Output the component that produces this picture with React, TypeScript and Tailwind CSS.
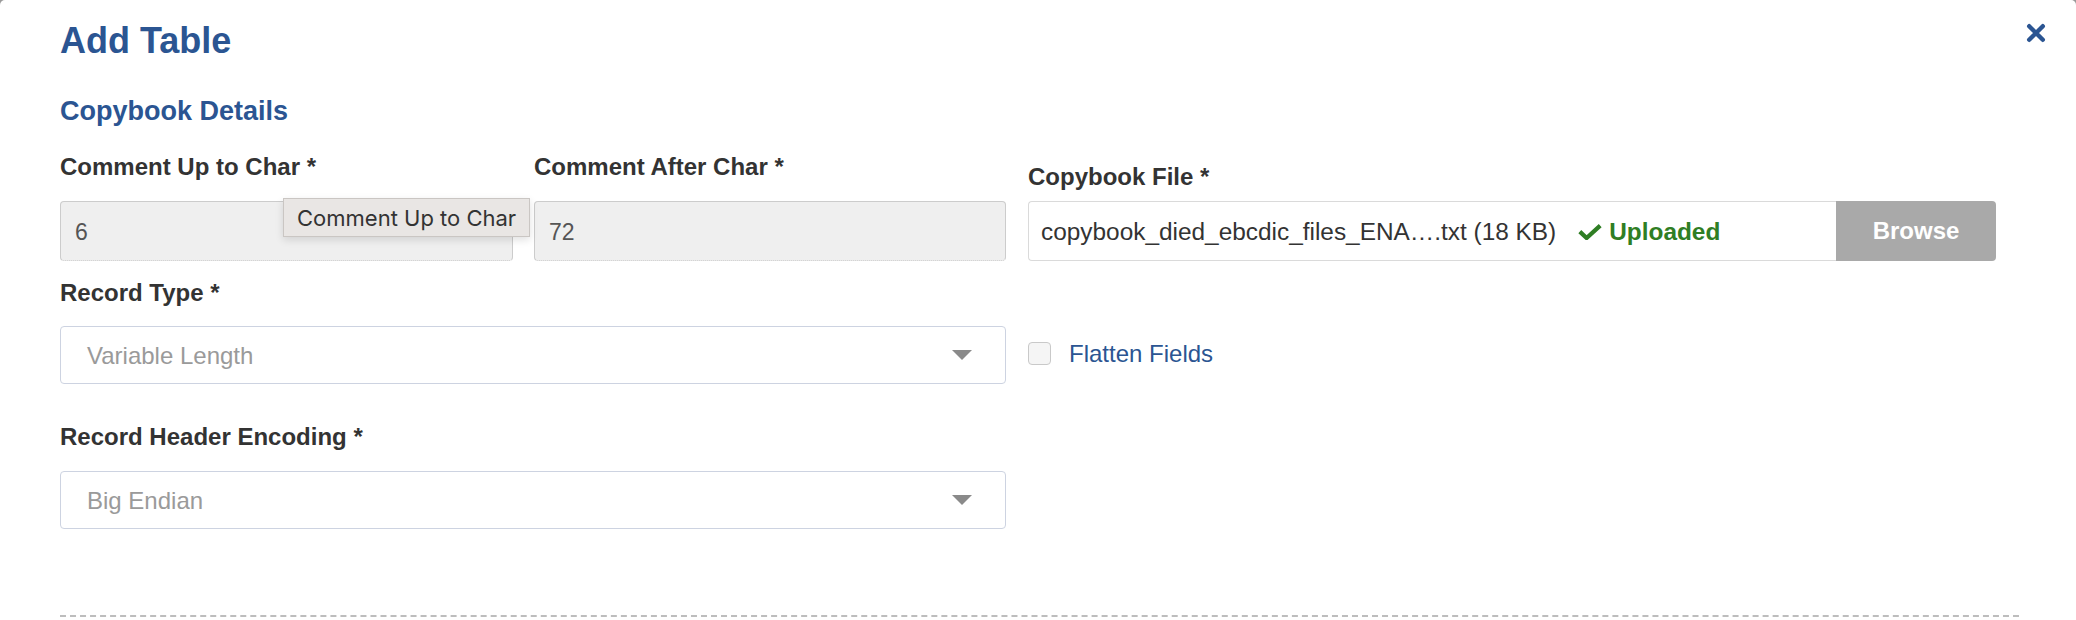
import React from 'react'

const font = { fontFamily: '"Liberation Sans", Arial, sans-serif' }

function Caret() {
  return (
    <svg width="20" height="10" viewBox="0 0 20 10" className="shrink-0">
      <path d="M0 0 L20 0 L10 10 Z" fill="#8a8a8a" />
    </svg>
  )
}

function Select({ value }: { value: string }) {
  return (
    <div className="flex h-[58px] items-center justify-between rounded-[4px] border border-[#cdd3e1] bg-white pl-[26px] pr-[33px]">
      <span className="pt-[2px] text-[24px] leading-none text-[#9a9a9a]">{value}</span>
      <Caret />
    </div>
  )
}

function Label({ children }: { children: React.ReactNode }) {
  return <div className="text-[24px] font-bold leading-none text-[#333333]">{children}</div>
}

function DisabledInput({ value }: { value: string }) {
  return (
    <div className="flex h-[60px] items-center rounded-[4px] border border-[#cccccc] bg-[#efefef] pl-[14px] pt-[2px] text-[23px] text-[#555555] [border-bottom-style:dotted]">
      {value}
    </div>
  )
}

export default function App() {
  return (
    <div className="h-[620px] w-[2076px] overflow-hidden bg-[#9a9a9a]" style={font}>
      <div className="h-full rounded-t-[5px] bg-white">
        <div className="flex items-start justify-between pl-[60px] pr-[30px] pt-[23px]">
          <h1 className="text-[36px] font-bold leading-none text-[#2b5592]">Add Table</h1>
          <button className="text-[#2b5592]">
            <svg width="20" height="20" viewBox="0 0 20 20">
              <path d="M3.2 3.2 L16.8 16.8 M16.8 3.2 L3.2 16.8" stroke="currentColor" strokeWidth="4.4" strokeLinecap="round" />
            </svg>
          </button>
        </div>

        <div className="pl-[60px] pr-[57px]">
          <h2 className="mt-[39px] text-[27px] font-bold leading-none text-[#2b5592]">Copybook Details</h2>

          <div className="mt-[30px] flex gap-[22px]">
            <div className="w-[946px]">
              <div className="grid grid-cols-[453px_472px] gap-x-[21px]">
                <div>
                  <Label>Comment Up to Char *</Label>
                  <div className="relative mt-[22px]">
                    <DisabledInput value="6" />
                    <div
                      className="absolute left-[223px] top-[-3px] flex h-[39px] w-[247px] items-center border border-[#cac6c3] bg-[#e9e6e4] pl-[13px] text-[22px] leading-none text-[#333333] shadow-[0_3px_8px_rgba(0,0,0,0.12)]"
                      style={{ fontFamily: 'Inter, "Liberation Sans", sans-serif' }}
                    >
                      Comment Up to Char
                    </div>
                  </div>
                </div>
                <div>
                  <Label>Comment After Char *</Label>
                  <div className="mt-[22px]">
                    <DisabledInput value="72" />
                  </div>
                </div>
              </div>

              <div className="mt-[20px]">
                <Label>Record Type *</Label>
              </div>
              <div className="mt-[21px]">
                <Select value="Variable Length" />
              </div>

              <div className="mt-[41px]">
                <Label>Record Header Encoding *</Label>
              </div>
              <div className="mt-[22px]">
                <Select value="Big Endian" />
              </div>
            </div>

            <div className="w-[968px] pt-[10px]">
              <Label>Copybook File *</Label>
              <div className="mt-[12px] flex h-[60px]">
                <div className="flex flex-1 items-center rounded-l-[4px] border border-r-0 border-[#dadada] pl-[12px] pt-[2px] text-[24.4px] leading-none text-[#333333]">
                  <span>copybook_died_ebcdic_files_ENA….txt (18 KB)</span>
                  <span className="ml-[22px] flex items-center text-[#2f7e24]">
                    <svg width="24" height="16" viewBox="0 0 24 16">
                      <path d="M1.8 7.6 L8.6 14 L22.2 1.6" fill="none" stroke="currentColor" strokeWidth="4.2" />
                    </svg>
                    <span className="ml-[7px] font-bold">Uploaded</span>
                  </span>
                </div>
                <button className="w-[160px] rounded-r-[4px] bg-[#a9a9a9] text-[24px] font-bold text-white">Browse</button>
              </div>

              <div className="mt-[79px] flex items-center">
                <div className="h-[23px] w-[23px] rounded-[4px] border border-[#c9c9c9] bg-[#f5f5f5]" />
                <span className="ml-[18px] pt-[2px] text-[24px] leading-none text-[#2b5592]">Flatten Fields</span>
              </div>
            </div>
          </div>

          <div className="mt-[86px] border-t-2 border-dashed border-[#bdbdbd]" />
        </div>
      </div>
    </div>
  )
}
